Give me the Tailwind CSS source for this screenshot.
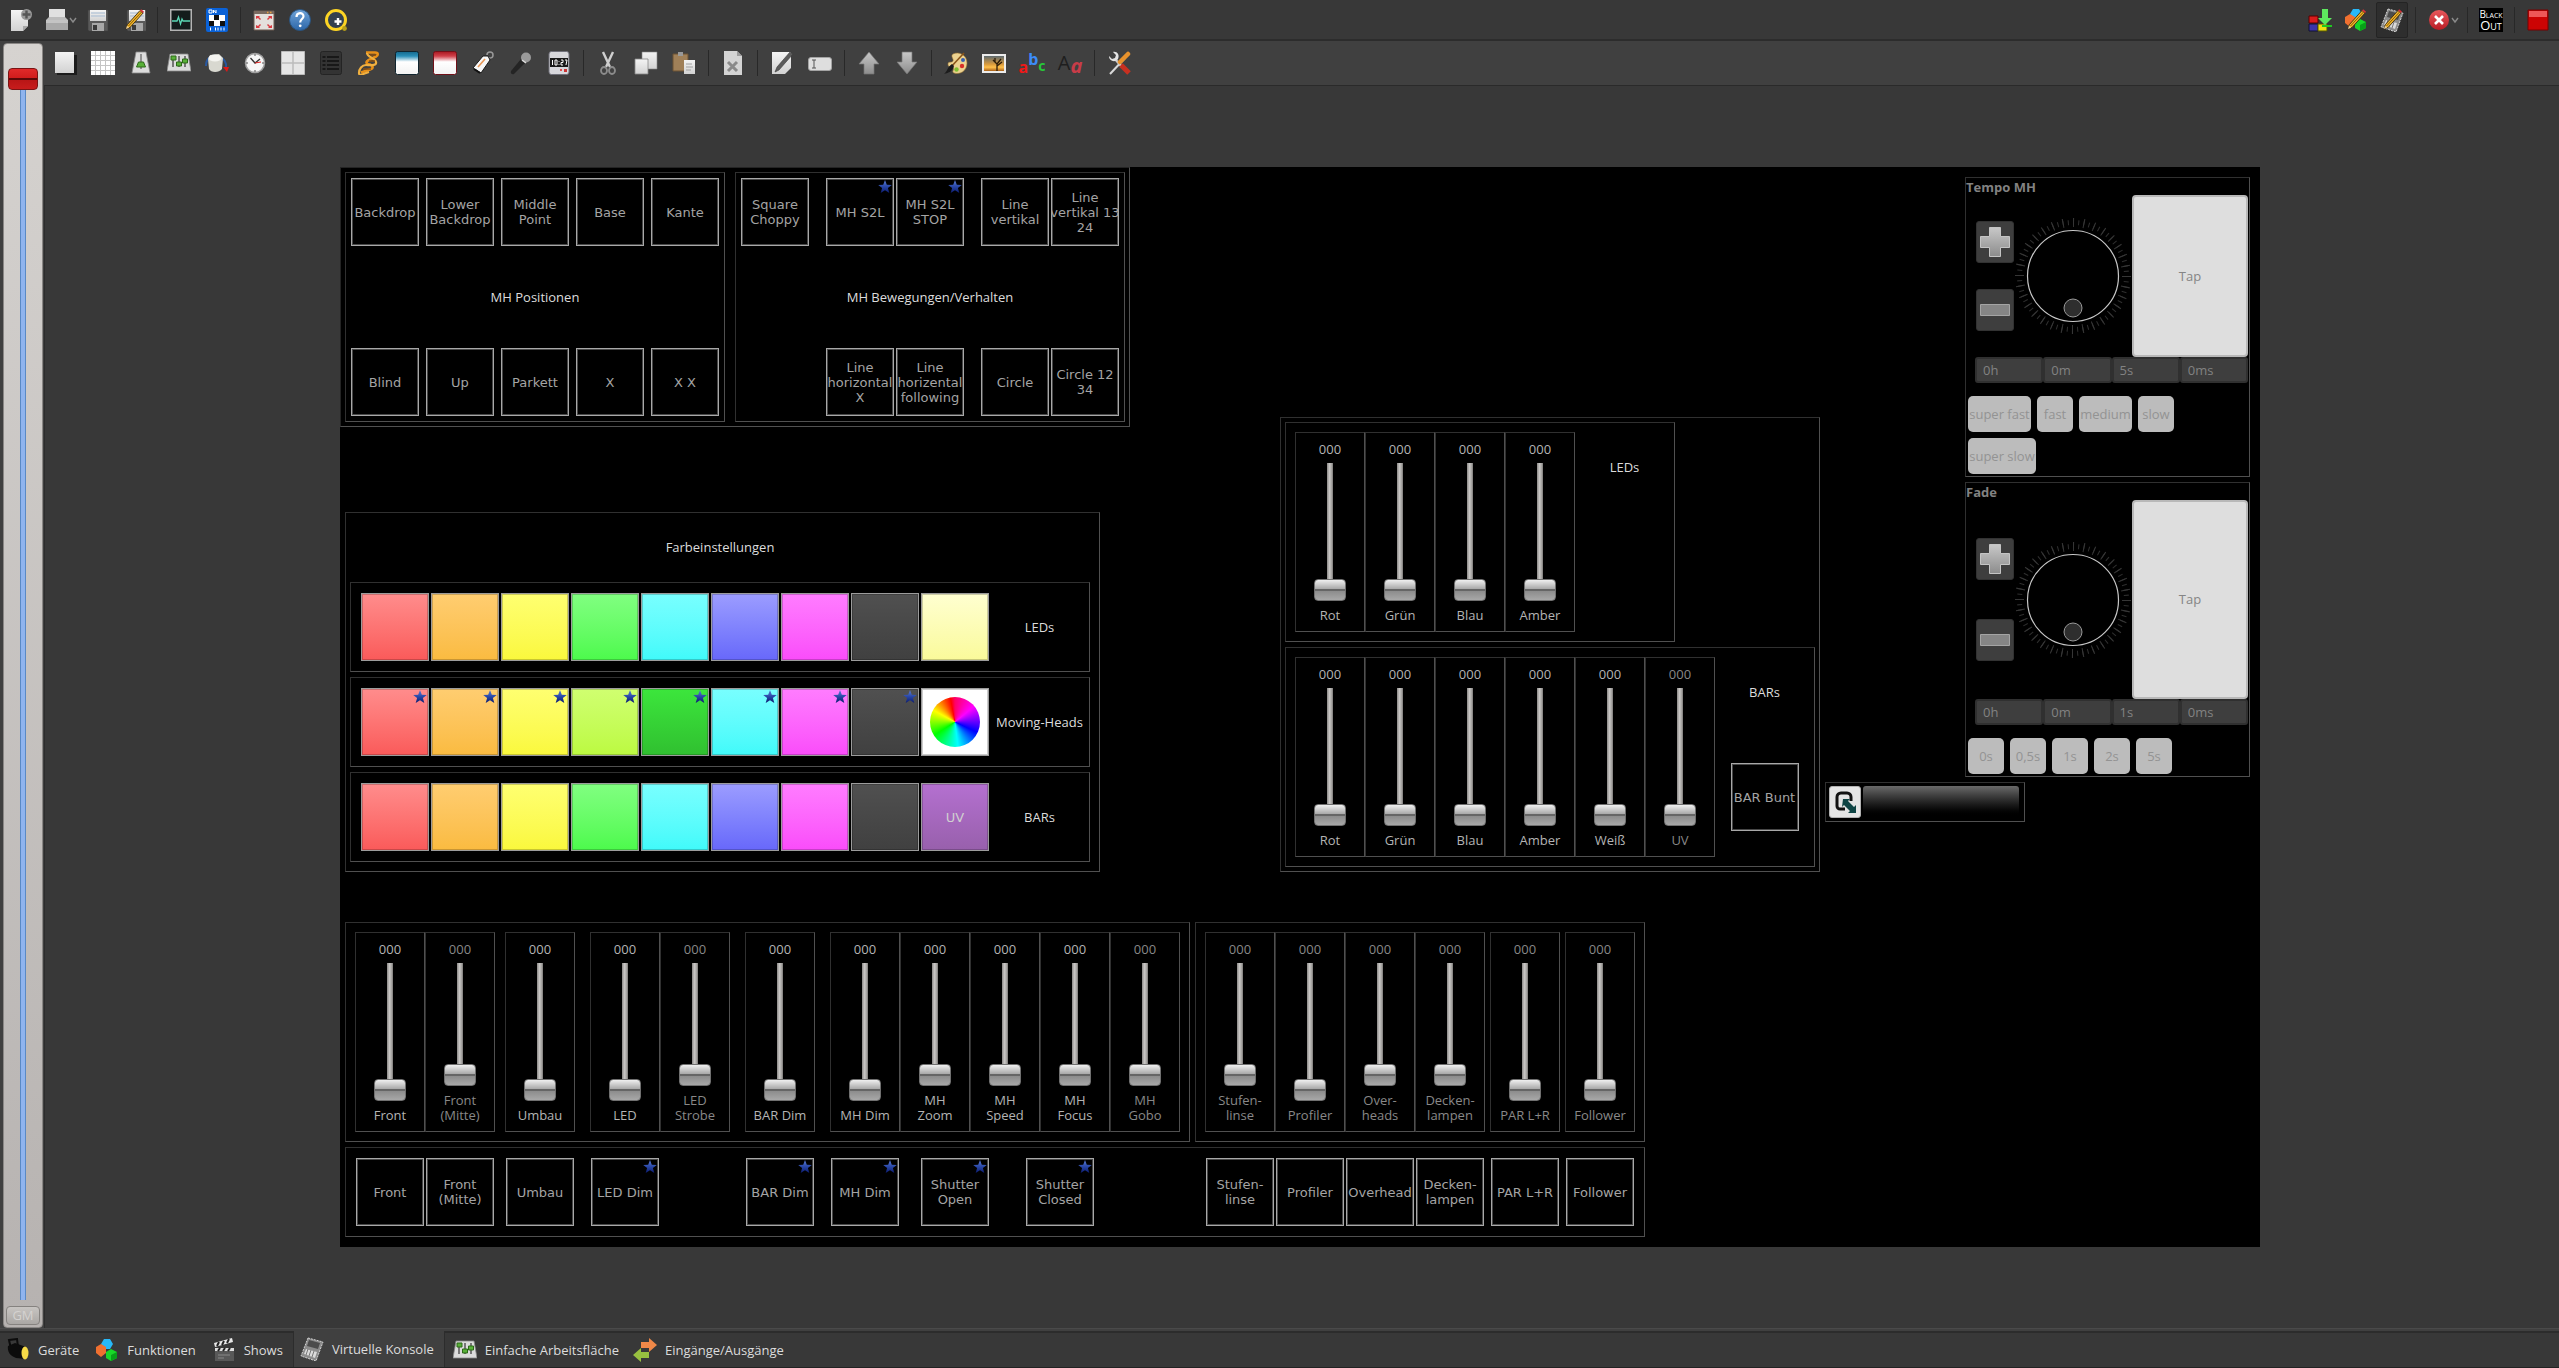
<!DOCTYPE html>
<html lang="de">
<head>
<meta charset="utf-8">
<title>Virtuelle Konsole</title>
<meta name="viewport" content="width=device-width, initial-scale=1">
<script src="https://cdn.jsdelivr.net/npm/@tailwindcss/browser@4"></script>
</head>
<body class="flex h-screen flex-col overflow-hidden bg-[#383838] font-['Open_Sans','Noto_Sans',sans-serif] text-[13px] leading-[15px] text-[#dcdcdc]">

<svg class="absolute size-0" aria-hidden="true">
  <defs>
    <linearGradient id="paper" x1="0" y1="0" x2="0" y2="1"><stop offset="0" stop-color="#f4f4f4"/><stop offset="1" stop-color="#d2d2d2"/></linearGradient>
    <linearGradient id="metal" x1="0" y1="0" x2="0" y2="1"><stop offset="0" stop-color="#c8c8c8"/><stop offset="1" stop-color="#8c8c8c"/></linearGradient>
    <linearGradient id="winBlue" x1="0" y1="0" x2="0" y2="1"><stop offset="0" stop-color="#15688c"/><stop offset=".2" stop-color="#2a8fb8"/><stop offset=".45" stop-color="#fff"/><stop offset="1" stop-color="#f2f2f2"/></linearGradient>
    <linearGradient id="winRed" x1="0" y1="0" x2="0" y2="1"><stop offset="0" stop-color="#a81820"/><stop offset=".2" stop-color="#d0404a"/><stop offset=".45" stop-color="#fff"/><stop offset="1" stop-color="#f2f2f2"/></linearGradient>
    <linearGradient id="starFill" x1="0" y1="0" x2="0" y2="1"><stop offset="0" stop-color="#5c7fd6"/><stop offset=".5" stop-color="#2a48a8"/><stop offset="1" stop-color="#0a1a6e"/></linearGradient>
    <linearGradient id="sunset" x1="0" y1="0" x2="0" y2="1"><stop offset="0" stop-color="#5d6a70"/><stop offset=".55" stop-color="#d99a3c"/><stop offset=".75" stop-color="#ffc04a"/><stop offset="1" stop-color="#a85f18"/></linearGradient>
    <linearGradient id="blueBall" x1="0" y1="0" x2="0" y2="1"><stop offset="0" stop-color="#6fa3d8"/><stop offset="1" stop-color="#2c66a8"/></linearGradient>
    <linearGradient id="redBall" x1="0" y1="0" x2="0" y2="1"><stop offset="0" stop-color="#e8585c"/><stop offset="1" stop-color="#b81c24"/></linearGradient>
    <g id="pencil"><path d="M4 21l1.200-4.200L18 2.500l3 2.600L8 19.500z" fill="#f0b428" stroke="#3a2a10" stroke-width=".9"/><path d="M18 2.500l3 2.600 1-1.400-2.800-2.500z" fill="#d8323a"/><path d="M4 21l1-3.300 2.200 2z" fill="#e8d0a0"/><path d="M6.500 18L19.500 4" stroke="#8a5c08" stroke-width="1"/></g>
    <g id="floppy"><path d="M2 2h20v21H3l-1-1z" fill="#5a5a5a" stroke="#3c3c3c" stroke-width=".6"/><path d="M4 2h16v11H4z" fill="url(#paper)"/><path d="M5 5h14M5 8h14" stroke="#b9c7d8" stroke-width="1.500"/><path d="M6 15h12v8H6z" fill="#a8a8a8"/><path d="M7 17h4v5H7z" fill="#3a3a3a"/></g>

    <symbol id="i-new" viewBox="0 0 24 24"><path d="M2 2h17v16l-5 5H2z" fill="url(#paper)"/><path d="M14 23v-5h5z" fill="#a8a8a8"/><circle cx="17.500" cy="6.500" r="5.500" fill="#9a9a9a"/><path d="M17.500 2.500v8M13.500 6.500h8" stroke="#565656" stroke-width="2.400"/></symbol>
    <symbol id="i-print" viewBox="0 0 24 24"><path d="M4 1h16v11H4z" fill="#e0e0e0"/><path d="M1 12l3-3h16l3 3z" fill="#bcbcbc"/><path d="M1 12h22v10H1z" fill="#a9a9a9"/><path d="M1 12h22v3H1z" fill="#c4c4c4"/></symbol>
    <symbol id="i-chev" viewBox="0 0 8 8"><path d="M1 2l3 4 3-4" fill="none" stroke="#8a8a8a" stroke-width="1.400"/></symbol>
    <symbol id="i-save" viewBox="0 0 24 24"><use href="#floppy"/></symbol>
    <symbol id="i-saveas" viewBox="0 0 24 24"><g transform="translate(3)"><use href="#floppy"/></g><use href="#pencil"/></symbol>
    <symbol id="i-monitor" viewBox="0 0 24 24"><path d="M1 1h22v22H1z" fill="#b4b4b4"/><path d="M2.500 2.500h19v19h-19z" fill="#141c1c"/><path d="M3 13h5l1.500-4 2 7 1.500-5 1 2h7" fill="none" stroke="#5ad6b4" stroke-width="1.300"/></symbol>
    <symbol id="i-dip" viewBox="0 0 24 24"><rect x="1" width="22" height="24" rx="2" fill="#0a62d8"/><path d="M4 2h3v3H4zM8.500 5V2L11 5V2" fill="none" stroke="#fff"/><path d="M4 7h16v11H4z" fill="#fff"/><path d="M4 13h5v5H4zM9 7h5v5H9zM15 13h5v5h-5z" fill="#111"/><path d="M5.500 19.500v3M10.500 19.500v3M13 19.500v3M16 19.500v3M19 19.500v3" stroke="#fff"/></symbol>
    <symbol id="i-full" viewBox="0 0 24 24"><path d="M2 3h20v19H2z" fill="#e4e0dc" stroke="#6a5a50"/><path d="M2 3h20v3H2z" fill="#7a6a60"/><path d="M15 4.500h1.500M18 4.500h1.500" stroke="#e8a040" stroke-width="1.500"/><path d="M4 8h4l-1 1 2 2-1 1-2-2-2 1zM20 8h-4l1 1-2 2 1 1 2-2 2 1zM4 20h4l-1-1 2-2-1-1-2 2-2-1zM20 20h-4l1-1-2-2 1-1 2 2 2-1z" fill="#d83a40"/></symbol>
    <symbol id="i-help" viewBox="0 0 24 24"><circle cx="12" cy="12" r="10.500" fill="url(#blueBall)" stroke="#2a5480"/><path d="M8.500 9c0-5 7-5 7-.8 0 2.800-3.300 3-3.300 6.200" fill="none" stroke="#fff" stroke-width="2.200"/><circle cx="12.200" cy="17.800" r="1.400" fill="#fff"/></symbol>
    <symbol id="i-qlc" viewBox="0 0 24 24"><circle cx="12" cy="12" r="9.500" fill="#32404e" stroke="#fcd424" stroke-width="3"/><path d="M14 10v7M10.500 13.500h7" stroke="#fff" stroke-width="2.400"/><circle cx="20.500" cy="20.500" r="2.400" fill="#b8a018"/></symbol>
    <symbol id="i-download" viewBox="0 0 24 24"><path d="M1 8h9v7H1z" fill="#d81c1c" stroke="#500"/><path d="M1 16h9v7H1z" fill="#3a34a8" stroke="#113"/><path d="M10 16h9v7h-9z" fill="#f0e010" stroke="#550"/><path d="M14 1h6v9h4l-7 7-7-7h4z" fill="#5ee85e"/><path d="M14 18h10" stroke="#20c820" stroke-width="2"/></symbol>
    <g id="cubes"><path d="M9 1l6 0 3 5-3 5H9L6 6z" fill="#28b8f8"/><path d="M1 9l5-3 5 3v6l-5 4-5-4z" fill="#f07030"/><path d="M11 14l5-3 6 3v6l-6 3-5-3z" fill="#18d828"/><path d="M16 17l6-3v6l-6 3z" fill="#08a018"/></g>
    <g id="consoleBody"><path d="M8 1l15 4-7 19L1 19z" fill="#8c8c8c" stroke="#d0d0d0" stroke-dasharray="2 1"/><path d="M9 3l11 3-2 6-11-3z" fill="#4c4c4c"/><path d="M6 12l11 3-2 6-11-4z" fill="#dadada"/><path d="M8 12l-2 6M11 13l-2 6M14 14l-2 6" stroke="#777"/></g>
    <symbol id="i-funcedit" viewBox="0 0 24 24"><use href="#cubes"/><use href="#pencil"/></symbol>
    <symbol id="i-conedit" viewBox="0 0 24 24"><use href="#consoleBody"/><use href="#pencil"/></symbol>
    <symbol id="i-stop" viewBox="0 0 24 24"><circle cx="12" cy="12" r="10" fill="url(#redBall)"/><path d="M8 8l8 8M16 8l-8 8" stroke="#fff" stroke-width="2.600"/></symbol>
    <symbol id="i-red" viewBox="0 0 24 24"><path d="M2 2h20v20H2z" fill="#cc0404" stroke="#700"/><path d="M3 3h18v6H3z" fill="#ee5858"/></symbol>

    <symbol id="i-button" viewBox="0 0 24 24"><path d="M4 4h20v20H4z" fill="#1c1c1c"/><path d="M2 1h19v21H2z" fill="url(#paper)"/></symbol>
    <symbol id="i-grid" viewBox="0 0 24 24"><path d="M0 0h24v24H0z" fill="#fff"/><path d="M4.500 0v24M9.500 0v24M14.500 0v24M19.500 0v24M0 4.500h24M0 9.500h24M0 14.500h24M0 19.500h24" stroke="#c4c4c4"/></symbol>
    <symbol id="i-slider" viewBox="0 0 24 24"><path d="M7 1h10l4 21H3z" fill="#dcdcdc" stroke="#888" stroke-width=".8"/><path d="M12 3v15" stroke="#777" stroke-width="1.500"/><path d="M9.500 11h5l2 5h-9z" fill="#58b038" stroke="#2c6818"/></symbol>
    <symbol id="i-sliders" viewBox="0 0 24 24"><path d="M3 3h18l3 17H0z" fill="#dcdcdc" stroke="#888" stroke-width=".8"/><path d="M6 5v11M12 5v11M18 5v11" stroke="#555" stroke-width="1.500"/><path d="M4 5h5v4H4zM9.500 11h5v4h-5zM15.500 8h5v4h-5z" fill="#58b038" stroke="#2c6818"/></symbol>
    <symbol id="i-knob" viewBox="0 0 24 24"><path d="M1 15C1 7 7 4 11 5M14 6c5 1 8 6 7 11" fill="none" stroke="#2858a0" stroke-width="2"/><path d="M3 8l2-4 9-1 4 4-1 11c-3 4-11 4-13 0z" fill="#d8d8d0"/><ellipse cx="10" cy="7" rx="6.500" ry="3.500" fill="#f4f4f0"/><path d="M18 16l6 0-2 5z" fill="#e01818"/></symbol>
    <symbol id="i-clock" viewBox="0 0 24 24"><circle cx="12" cy="12" r="9.500" fill="#f6f6f6" stroke="#a0a0a0" stroke-width="1.500"/><path d="M12 3v2M12 19v2M3 12h2M19 12h2" stroke="#555"/><path d="M7.500 7l4.500 5 5-4" fill="none" stroke="#333" stroke-width="1.300"/><path d="M12 12l6-1" stroke="#d22"/></symbol>
    <symbol id="i-frame" viewBox="0 0 24 24"><path d="M.5.5h23v23H.5z" fill="#e6e6e6" stroke="#bbb"/><path d="M12 1v22M1 12h22" stroke="#bcbcbc" stroke-width="1.500"/></symbol>
    <symbol id="i-list" viewBox="0 0 24 24"><rect x="1.500" y=".5" width="21" height="23" rx="2" fill="#333" stroke="#242424"/><path d="M3.500 6h3M3.500 10h3M3.500 14h3M3.500 18h3M8 6h12M8 10h12M8 14h12M8 18h12" stroke="#181818" stroke-width="2"/></symbol>
    <symbol id="i-dna" viewBox="0 0 24 24"><path d="M9 1.500h9c4 0 3 3 1 4l-8 4c-3 2-1 4 2 4 3 1 4 4 0 5l-9 3" fill="none" stroke="#e89018" stroke-width="2.600"/><path d="M10 2c0 4 8 5 9 9s-6 3-10 3-7 4-7 8 6 0 10-1" fill="none" stroke="#f0b040" stroke-width="2.200"/><path d="M13 4h6M12 10h6M6 18h8" stroke="#8a5010" stroke-width="1.500"/></symbol>
    <symbol id="i-winblue" viewBox="0 0 24 24"><rect x="0.500" y=".5" width="23" height="23" rx="2" fill="url(#winBlue)" stroke="#10242e"/></symbol>
    <symbol id="i-winred" viewBox="0 0 24 24"><rect x="0.500" y=".5" width="23" height="23" rx="2" fill="url(#winRed)" stroke="#701018"/></symbol>
    <symbol id="i-label" viewBox="0 0 24 24"><path d="M16 4c0-4 6-4 6 0s-4 3-5 2" fill="none" stroke="#999" stroke-width="1.500"/><path d="M2 17L12 5l5 0 2 4-9 13z" fill="#f8f8f8" stroke="#1a1a1a"/><path d="M7 16l7-8" stroke="#e89858" stroke-width="1.600"/><path d="M3 18l6 4" stroke="#111" stroke-width="2"/></symbol>
    <symbol id="i-mic" viewBox="0 0 24 24"><path d="M12 8l4 4L5 23c-2 1-4-1-3-3z" fill="#242424"/><circle cx="17" cy="6.500" r="5" fill="#9a9a9a"/><path d="M13 9l4 3" stroke="#ddd" stroke-width="1.500"/></symbol>
    <symbol id="i-digi" viewBox="0 0 24 24"><rect x="2" y=".5" width="20" height="23" rx="2.500" fill="#d8d8dc" stroke="#70707a"/><path d="M3 7h18v9H3z" fill="#1a1a1a"/><path d="M5.500 9v5M8 9h2v5H8zM12 10v.8M12 13v.8M14 9h2v2.500h-2V14h2M18 9h2l-1 5" fill="none" stroke="#fff"/><circle cx="14" cy="19" r="1" fill="#d22"/><path d="M17 18h3v3h-3z" fill="#c33"/></symbol>
    <symbol id="i-cut" viewBox="0 0 24 24"><path d="M7 1l7 15M17 1L10 16" stroke="#cfcfcf" stroke-width="2.400"/><ellipse cx="8" cy="19.500" rx="3" ry="3.500" fill="none" stroke="#8c8c8c" stroke-width="1.800"/><ellipse cx="16" cy="19.500" rx="3" ry="3.500" fill="none" stroke="#8c8c8c" stroke-width="1.800"/></symbol>
    <symbol id="i-copy" viewBox="0 0 24 24"><path d="M8 1h15v17H8z" fill="url(#paper)" stroke="#888" stroke-width=".6"/><path d="M1 8h13v15H1z" fill="url(#paper)" stroke="#888" stroke-width=".8"/></symbol>
    <symbol id="i-paste" viewBox="0 0 24 24"><path d="M1 3h15v17H1z" fill="#a08058" stroke="#6c5232"/><path d="M6 1h5v4H6z" fill="#999"/><path d="M12 9h11v14H12z" fill="url(#paper)"/><path d="M14 13h6M14 16h7M14 19h5" stroke="#a0a0a0"/></symbol>
    <symbol id="i-delete" viewBox="0 0 24 24"><path d="M3 0h13l5 5v19H3z" fill="#d4d4d4"/><path d="M16 0v5h5z" fill="#9c9c9c"/><path d="M7 11l9 9M16 11l-9 9" stroke="#8a8a8a" stroke-width="3"/></symbol>
    <symbol id="i-edit" viewBox="0 0 24 24"><path d="M2 1h19v16l-6 6H2z" fill="url(#paper)"/><path d="M5 21l2-5L20 1l3 2L9 19z" fill="#5c5c5c" stroke="#3a3a3a" stroke-width=".6"/></symbol>
    <symbol id="i-rename" viewBox="0 0 24 24"><rect x=".5" y="6.500" width="23" height="13" rx="2.500" fill="#dedede" stroke="#a4a4a4"/><path d="M4 9h4M6 9v8M4 17h4" stroke="#555"/></symbol>
    <symbol id="i-up" viewBox="0 0 24 24"><path d="M12 1l10 12h-5v10H7V13H2z" fill="url(#metal)" stroke="#777" stroke-width=".7"/></symbol>
    <symbol id="i-down" viewBox="0 0 24 24"><path d="M12 23l10-12h-5V1H7v10H2z" fill="url(#metal)" stroke="#777" stroke-width=".7"/></symbol>
    <symbol id="i-palette" viewBox="0 0 24 24"><path d="M9 3C15 0 23 4 23 12s-7 12-13 10c-3-1 1-4-1-6-2-1-5 1-5-3 0-3 4-1 5-3s-3-5 0-7z" fill="#ecd290" stroke="#9a7430" stroke-width=".6"/><circle cx="19" cy="9" r="2" fill="#3860b0"/><circle cx="18" cy="15" r="2.200" fill="#d83028"/><circle cx="12.500" cy="18.500" r="2.200" fill="#80c030"/><path d="M20 2L6 17" stroke="#8a5418" stroke-width="1.600"/><path d="M8 13l2 2c-2 6-6 7-10 8 4-3 3-7 8-10z" fill="#1c1c1c"/></symbol>
    <symbol id="i-picture" viewBox="0 0 24 24"><path d="M0 3h24v19H0z" fill="#ececec"/><path d="M2 5h20v15H2z" fill="url(#sunset)"/><path d="M15 20v-7l-4-4M15 13l4-5M15 15l5-4M13 11V7" fill="none" stroke="#2c1c08" stroke-width="1.300"/></symbol>
    <symbol id="i-tools" viewBox="0 0 24 24"><path d="M3 23L18 7" stroke="#d8d8d8" stroke-width="2"/><path d="M8 8l7 8" stroke="#ccc" stroke-width="2.600"/><path d="M2 5l3 3 3-1 1-3-3-3c4-1 7 3 5 7-3 4-9 2-9-3z" fill="#e4e4e4"/><path d="M14 14l8 8" stroke="#c83020" stroke-width="5"/><path d="M13 11L21 3" stroke="#e8922c" stroke-width="4.500" stroke-linecap="round"/></symbol>

    <symbol id="i-lamp" viewBox="0 0 24 24"><path d="M3 2l8-1 1 8-7 2z" fill="none" stroke="#0c0c0c" stroke-width="2"/><path d="M2 8l7-3 11 4v12l-10-1C4 18 1 13 2 8z" fill="#0c0c0c"/><ellipse cx="19" cy="15" rx="3.500" ry="6.500" fill="#f8dc48"/></symbol>
    <symbol id="i-cubes" viewBox="0 0 24 24"><use href="#cubes"/></symbol>
    <symbol id="i-clap" viewBox="0 0 24 24"><path d="M3 10h19v13H3z" fill="#585858"/><path d="M2 5l18-5 1 4L3 9z" fill="#e8e8e8"/><path d="M5 8l2-4M10 7l2-4M15 5l2-4" stroke="#222" stroke-width="2"/><path d="M3 10h19v3H3z" fill="#ddd"/><path d="M6 13l2-3M11 13l2-3M16 13l2-3" stroke="#222" stroke-width="2"/><path d="M6 17h12M6 20h6" stroke="#888"/></symbol>
    <symbol id="i-console" viewBox="0 0 24 24"><use href="#consoleBody"/></symbol>
    <symbol id="i-io" viewBox="0 0 24 24"><path d="M8 4h8V0l8 7-8 7v-4H8z" fill="#f08848"/><path d="M16 14H8v-4l-8 7 8 7v-4h8z" fill="#98c040"/></symbol>
    <symbol id="i-star" viewBox="0 0 14 14"><path d="M7 0l1.800 4.700 5 .2L9.900 8l1.400 5L7 10.300 2.700 13l1.400-5L.2 4.900l5-.2z" fill="url(#starFill)"/></symbol>
    <symbol id="i-plus" viewBox="0 0 30 30"><path d="M9.500.5h11v9h9v11h-9v9h-11v-9h-9v-11h9z" fill="url(#metal)" stroke="#c4c4c4"/></symbol>
    <symbol id="i-minus" viewBox="0 0 30 30"><path d="M.5 9.500h29v11H.5z" fill="#858585" stroke="#a4a4a4"/></symbol>
    <symbol id="i-mark" viewBox="0 0 24 24"><path d="M12 19H7a3 3 0 01-3-3V7a4 4 0 014-4h6a4 4 0 014 4v4" fill="none" stroke="#111" stroke-width="3"/><path d="M10 9h7l-2 2 6 6 2-2v8h-8l2-2-6-6-2 2z" fill="#0e4444"/></symbol>
    <symbol id="i-dial" viewBox="0 0 118 118">
      <g fill="none" transform="rotate(90 59 59)"><circle cx="59" cy="59" r="53.500" pathLength="64" stroke="#2e2e2e" stroke-width="5" stroke-dasharray=".2 .8"/><circle cx="59" cy="59" r="53.500" pathLength="32" stroke="#363636" stroke-width="9" stroke-dasharray=".1 .9"/></g>
      <circle cx="59" cy="59" r="45.500" fill="#000" stroke="#c8c8c8" stroke-width="1.200"/><circle cx="59" cy="91" r="9" fill="#2e2e2e" stroke="#9a9a9a"/>
    </symbol>
  </defs>
</svg>

<header class="flex h-[41px] shrink-0 items-center justify-between border-b-2 border-[#2c2c2c] px-[5px]">
  <div class="flex items-center gap-1" data-tools="new print> save saveas | monitor dip | full help qlc"></div>
  <div class="flex items-center gap-1" data-tools="download funcedit conedit! | stop> | blackout | red"></div>
</header>

<div class="flex min-h-0 flex-1">
  <aside class="flex w-11 shrink-0 flex-col bg-[#404040] pt-0.5 pl-[3px] pr-px">
    <div class="flex min-h-0 flex-1 flex-col items-center rounded-sm border border-[#8a8785] bg-linear-to-b from-[#d6d3d0] to-[#b6b2b0] pt-6 pb-0.5">
      <input type="range" min="0" max="255" value="255" aria-label="Grand Master" class="m-0 mb-1.5 min-h-0 w-[30px] flex-1 appearance-none bg-[linear-gradient(to_right,#3f74b0,#8fb4ee_25%,#8fb4ee_75%,#3f74b0)] bg-[length:6px_100%] bg-center bg-no-repeat [direction:rtl] [writing-mode:vertical-lr] [&::-webkit-slider-thumb]:h-[22px] [&::-webkit-slider-thumb]:w-[30px] [&::-webkit-slider-thumb]:appearance-none [&::-webkit-slider-thumb]:rounded-[4px] [&::-webkit-slider-thumb]:border [&::-webkit-slider-thumb]:border-[#7a1414] [&::-webkit-slider-thumb]:bg-[linear-gradient(#e02a2a,#d01c1c_45%,#5a0808_46%,#5a0808_54%,#b81616_55%,#c81c1c)]">
      <button class="h-[19px] w-[34px] rounded-[4px] border border-[#85827f] bg-linear-to-b from-[#c8c5c2] to-[#aaa7a4] text-[#d4d2d0]">GM</button>
    </div>
  </aside>

  <div class="flex min-w-0 flex-1 flex-col">
    <div class="flex h-[45px] shrink-0 items-center gap-1 border-b border-[#2a2a2a] bg-[#404040] pl-1" data-tools="wide button grid slider sliders knob clock frame list dna winblue winred label mic digi | cut copy paste | delete | edit rename | up down | palette picture abc font | tools"></div>

    <main class="flex min-h-0 flex-1 items-center justify-center overflow-hidden border-l border-[#2c2c2c] pr-1">
      <!-- free canvas: frames sit where the operator dropped them -->
      <div class="relative h-[1080px] w-[1920px] shrink-0 bg-black">

        <section class="absolute top-0 left-0 flex h-[260px] w-[790px] gap-2.5 border border-t-[#242424] border-r-[#505050] border-b-[#505050] border-l-[#242424] p-1">
          <div class="flex w-[380px] flex-col justify-between border border-t-[#303030] border-r-[#505050] border-b-[#505050] border-l-[#303030] px-1 py-1">
            <div class="flex gap-[5px]" data-buttons="Backdrop;Lower/Backdrop;Middle/Point;Base;Kante"></div>
            <h2 class="text-center">MH Positionen</h2>
            <div class="flex gap-[5px]" data-buttons="Blind;Up;Parkett;X;X X"></div>
          </div>
          <div class="flex w-[390px] flex-col justify-between border border-t-[#303030] border-r-[#505050] border-b-[#505050] border-l-[#303030] px-1 py-1">
            <div class="flex gap-[15px]">
              <div class="flex" data-buttons="Square/Choppy"></div>
              <div class="flex" data-buttons="MH S2L*;MH S2L/STOP*"></div>
              <div class="flex" data-buttons="Line/vertikal;Line/vertikal 13/24"></div>
            </div>
            <h2 class="text-center">MH Bewegungen/Verhalten</h2>
            <div class="flex gap-[15px] pl-[85px]">
              <div class="flex" data-buttons="Line/horizontal/X;Line/horizental/following"></div>
              <div class="flex" data-buttons="Circle;Circle 12/34"></div>
            </div>
          </div>
        </section>

        <section class="absolute top-[345px] left-[5px] flex h-[360px] w-[755px] flex-col gap-[5px] border border-t-[#303030] border-r-[#505050] border-b-[#505050] border-l-[#303030] pr-[9px] pl-1">
          <h2 class="pt-[27px] pb-[22px] text-center">Farbeinstellungen</h2>
          <div class="flex h-[90px] items-center border border-t-[#303030] border-r-[#505050] border-b-[#505050] border-l-[#303030] pl-[9px]"><div class="flex" data-swatches="red orange yellow green cyan blue magenta dark cream"></div><h3 class="flex-1 text-center">LEDs</h3></div>
          <div class="flex h-[90px] items-center border border-t-[#303030] border-r-[#505050] border-b-[#505050] border-l-[#303030] pl-[9px]"><div class="flex" data-swatches="red* orange* yellow* lime* forest* cyan* magenta* dark* wheel"></div><h3 class="flex-1 text-center">Moving-Heads</h3></div>
          <div class="flex h-[90px] items-center border border-t-[#303030] border-r-[#505050] border-b-[#505050] border-l-[#303030] pl-[9px]"><div class="flex" data-swatches="red orange yellow green cyan blue magenta dark uv"></div><h3 class="flex-1 text-center">BARs</h3></div>
        </section>

        <section class="absolute top-[250px] left-[940px] flex h-[455px] w-[540px] flex-col gap-[5px] border border-t-[#303030] border-r-[#505050] border-b-[#505050] border-l-[#303030] p-1">
          <div class="flex h-[220px] w-[390px] border border-t-[#303030] border-r-[#505050] border-b-[#505050] border-l-[#303030] py-[9px] pl-[9px]">
            <div class="flex" data-sliders="Rot;Grün;Blau;Amber"></div>
            <h3 class="flex-1 pt-7 text-center">LEDs</h3>
          </div>
          <div class="flex h-[220px] border border-t-[#303030] border-r-[#505050] border-b-[#505050] border-l-[#303030] py-[9px] pl-[9px]">
            <div class="flex" data-sliders="Rot;Grün;Blau;Amber;Weiß;UV~"></div>
            <div class="flex flex-1 flex-col items-center justify-between pt-7 pb-[25px]"><h3>BARs</h3><div data-buttons="BAR Bunt"></div></div>
          </div>
        </section>

        <section class="absolute top-[755px] left-[5px] flex h-[220px] w-[845px] gap-[15px] border border-t-[#303030] border-r-[#505050] border-b-[#505050] border-l-[#303030] p-[9px]">
          <div class="flex gap-2.5"><div class="flex" data-sliders="Front;Front/(Mitte)~"></div><div class="flex" data-sliders="Umbau"></div></div>
          <div class="flex" data-sliders="LED;LED/Strobe~"></div>
          <div class="flex" data-sliders="BAR Dim"></div>
          <div class="flex" data-sliders="MH Dim;MH/Zoom;MH/Speed;MH/Focus;MH/Gobo~"></div>
        </section>

        <section class="absolute top-[755px] left-[855px] flex h-[220px] w-[450px] gap-[5px] border border-t-[#303030] border-r-[#505050] border-b-[#505050] border-l-[#303030] p-[9px]">
          <div class="flex" data-sliders="Stufen-/linse~;Profiler~;Over-/heads~;Decken-/lampen~"></div>
          <div class="flex" data-sliders="PAR L+R~"></div>
          <div class="flex" data-sliders="Follower~"></div>
        </section>

        <section class="absolute top-[980px] left-[5px] flex h-[90px] w-[1300px] justify-between border border-t-[#303030] border-r-[#505050] border-b-[#505050] border-l-[#303030] p-[9px]">
          <div class="flex">
            <div class="flex" data-buttons="Front;Front/(Mitte)"></div>
            <div class="ml-2.5" data-buttons="Umbau"></div>
            <div class="ml-[15px]" data-buttons="LED Dim*"></div>
            <div class="ml-[85px]" data-buttons="BAR Dim*"></div>
            <div class="ml-[15px]" data-buttons="MH Dim*"></div>
            <div class="ml-5" data-buttons="Shutter/Open*"></div>
            <div class="ml-[35px]" data-buttons="Shutter/Closed*"></div>
          </div>
          <div class="flex gap-[5px]">
            <div class="flex" data-buttons="Stufen-/linse;Profiler;Overhead;Decken-/lampen"></div>
            <div data-buttons="PAR L+R"></div>
            <div data-buttons="Follower"></div>
          </div>
        </section>

        <section class="absolute top-2.5 left-[1625px] flex h-[300px] w-[285px] flex-col border border-t-[#303030] border-r-[#505050] border-b-[#505050] border-l-[#303030] text-[#828282]" data-speed="Tempo MH;0h 0m 5s 0ms;super fast/fast/medium/slow/super slow"></section>
        <section class="absolute top-[315px] left-[1625px] flex h-[295px] w-[285px] flex-col border border-t-[#303030] border-r-[#505050] border-b-[#505050] border-l-[#303030] text-[#828282]" data-speed="Fade;0h 0m 1s 0ms;0s/0,5s/1s/2s/5s"></section>

        <section class="absolute top-[615px] left-[1485px] flex h-10 w-[200px] gap-0.5 border border-t-[#303030] border-r-[#505050] border-b-[#505050] border-l-[#303030] p-[3px] pr-[5px]">
          <button aria-label="Animation" class="flex w-8 items-center justify-center rounded-[3px] border border-[#b0b0b0] bg-[#e4e4e4]"><svg class="size-6"><use href="#i-mark"/></svg></button>
          <div class="flex-1 rounded-[3px] bg-linear-to-b from-[#6a6a6a] to-black"></div>
        </section>
      </div>
    </main>
  </div>
</div>

<nav class="flex h-10 shrink-0 items-stretch border-t border-b border-t-[#4a4a4a] border-b-[#222] bg-[#404040]">
  <div class="mt-0.5 flex items-center gap-4 border-t-2 border-r border-[#2c2c2c] bg-[#383838] pr-2.5 pl-1.5">
    <a href="#geraete" class="flex items-center gap-2"><svg class="size-6"><use href="#i-lamp"/></svg>Geräte</a>
    <a href="#funktionen" class="flex items-center gap-2"><svg class="size-6"><use href="#i-cubes"/></svg>Funktionen</a>
    <a href="#shows" class="flex items-center gap-2"><svg class="size-6"><use href="#i-clap"/></svg>Shows</a>
  </div>
  <a href="#konsole" aria-current="page" class="flex items-center gap-2 pt-0.5 pr-2.5 pl-1.5"><svg class="size-6"><use href="#i-console"/></svg>Virtuelle Konsole</a>
  <div class="mt-0.5 flex flex-1 items-center gap-3.5 border-t-2 border-l border-[#2c2c2c] bg-[#383838] pl-2">
    <a href="#arbeitsflaeche" class="flex items-center gap-2"><svg class="size-6"><use href="#i-sliders"/></svg>Einfache Arbeitsfläche</a>
    <a href="#ein-aus" class="flex items-center gap-2"><svg class="size-6"><use href="#i-io"/></svg>Eingänge/Ausgänge</a>
  </div>
</nav>

<script>
const fill = (key, render) => document.querySelectorAll(`[data-${key}]`).forEach(el => { el.innerHTML = render(el.dataset[key]); });
const star = '<svg class="absolute top-px right-px size-3.5"><use href="#i-star"/></svg>';

// toolbars: "|" separator, ">" drop-down arrow, "!" pressed
const special = {
  blackout: '<span class="flex h-6 w-6 flex-col items-center justify-center bg-black font-[\'Roboto\',sans-serif] leading-[11px] text-white [font-variant:small-caps]"><span class="text-[10px]">Black</span><span class="text-[13px]">Out</span></span>',
  abc: '<span class="flex h-6 items-center font-[\'Liberation_Serif\',serif] text-base leading-6 font-bold"><span class="pt-2 text-[#f01818]">a</span><span class="pb-2 text-[#3c8cf8]">b</span><span class="pt-1.5 text-sm text-[#28c838]">c</span></span>',
  font: '<span class="flex h-6 items-center font-[\'Liberation_Serif\',serif] text-xl leading-6"><span class="text-[#1e1e1e]">A</span><span class="pt-1.5 font-bold text-[#c83c48] italic">a</span></span>'
};
fill('tools', spec => {
  const wide = spec.startsWith('wide ');
  return spec.replace('wide ', '').split(' ').map(t => {
    if (t === '|') return '<span class="flex h-[26px] w-[7px] justify-center"><span class="w-px bg-[#282828]"></span></span>';
    const name = t.replace(/[>!]/, '');
    const icon = special[name] || `<svg class="size-6 shrink-0"><use href="#i-${name}"/></svg>`;
    const box = t.endsWith('>') ? 'flex h-9 w-[37px] items-center pl-1'
      : t.endsWith('!') ? 'flex h-9 w-8 items-center justify-center rounded-xs border border-[#242424] bg-[#2e2e2e]'
      : wide ? 'flex h-9 w-[34px] items-center justify-center' : 'flex h-9 w-8 items-center justify-center';
    return `<button aria-label="${name}" class="${box}">${icon}${t.endsWith('>') ? '<svg class="size-2 shrink-0"><use href="#i-chev"/></svg>' : ''}</button>`;
  }).join('');
});

// captions: "/" breaks the line, "*" marks an input binding
fill('buttons', spec => spec.split(';').map(t =>
  `<button class="relative m-px flex size-[68px] shrink-0 items-center justify-center overflow-hidden border border-[#a8a8a8] font-['DejaVu_Sans',sans-serif] text-[#a4a4a4] inset-ring inset-ring-[#484848]"><span class="-mx-2 text-center whitespace-nowrap">${t.replace('*', '').replace(/\//g, '<br>')}</span>${t.endsWith('*') ? star : ''}</button>`).join(''));

const swatch = {
  red: 'bg-linear-to-b from-[#ff8c8c] to-[#fa5a5a]', orange: 'bg-linear-to-b from-[#ffcd70] to-[#fabb40]',
  yellow: 'bg-linear-to-b from-[#ffff70] to-[#faf83c]', green: 'bg-linear-to-b from-[#80ff80] to-[#4cfa4c]',
  cyan: 'bg-linear-to-b from-[#78ffff] to-[#40fafa]', blue: 'bg-linear-to-b from-[#9c9cff] to-[#6868fa]',
  magenta: 'bg-linear-to-b from-[#ff7cff] to-[#fa4cfa]', dark: 'bg-linear-to-b from-[#505050] to-[#404040]',
  cream: 'bg-linear-to-b from-[#ffffd0] to-[#fafa9a]', lime: 'bg-linear-to-b from-[#d0ff70] to-[#bcfa40]',
  forest: 'bg-linear-to-b from-[#3ce63c] to-[#30c030]', uv: 'bg-linear-to-b from-[#b470d0] to-[#9860ac]', wheel: 'bg-white'
};
fill('swatches', spec => spec.split(' ').map(t => {
  const name = t.replace('*', '');
  const inner = name === 'uv' ? 'UV' : name === 'wheel' ? '<span class="size-[50px] rounded-full bg-[conic-gradient(#f06,#f0f_14%,#00f_32%,#0ff_48%,#0f0_66%,#ff0_83%,#f00_97%,#f06)]"></span>' : '';
  return `<button aria-label="${name}" class="relative m-px flex size-[68px] shrink-0 items-center justify-center border border-[#9c9c9c] font-['DejaVu_Sans',sans-serif] text-[#d0d0d0] inset-ring inset-ring-black/20 ${swatch[name]}">${inner}${t.endsWith('*') ? star : ''}</button>`;
}).join(''));

// "~" marks a slider without input
fill('sliders', spec => spec.split(';').map(t => {
  const label = t.replace('~', '');
  return `<label class="flex h-[200px] w-[70px] shrink-0 flex-col items-center border border-t-[#303030] border-r-[#505050] border-b-[#505050] border-l-[#303030] pt-[9px] pb-2 text-center ${t.endsWith('~') ? 'text-[#888]' : 'text-[#b4b4b4]'}"><output>000</output><input type="range" min="0" max="255" value="0" class="m-0 mt-1.5 mb-[7px] min-h-0 w-8 flex-1 appearance-none bg-[linear-gradient(to_right,#8a8886,#c8c6c4_40%,#b0aeac_70%,#7a7876)] bg-[length:6px_100%] bg-center bg-no-repeat [direction:rtl] [writing-mode:vertical-lr] [&::-webkit-slider-thumb]:h-[22px] [&::-webkit-slider-thumb]:w-8 [&::-webkit-slider-thumb]:appearance-none [&::-webkit-slider-thumb]:rounded-[4px] [&::-webkit-slider-thumb]:border [&::-webkit-slider-thumb]:border-[#707070] [&::-webkit-slider-thumb]:bg-[linear-gradient(#f0f0f0,#a8a8a8_45%,#666_46%,#666_54%,#8c8c8c_55%,#a8a8a8)]"><span>${label.replace(/\//g, '<br>')}</span></label>`;
}).join(''));

const presetWidth = { 'super fast': 'w-[63px]', 'medium': 'w-[53px]', 'super slow': 'w-[68px]' };
fill('speed', spec => {
  const [title, times, presets] = spec.split(';');
  return `<h3 class="h-[17px] pt-0.5 font-bold">${title}</h3>
  <div class="flex min-h-0 flex-1 pr-px pl-2.5">
    <div class="flex w-[38px] flex-col justify-evenly">
      <button aria-label="Mehr" class="flex h-[42px] items-center justify-center rounded-[3px] border border-[#323232] bg-[#3e3e3e]"><svg class="size-[30px]"><use href="#i-plus"/></svg></button>
      <button aria-label="Weniger" class="flex h-[42px] items-center justify-center rounded-[3px] border border-[#323232] bg-[#3e3e3e]"><svg class="size-[30px]"><use href="#i-minus"/></svg></button>
    </div>
    <div class="flex flex-1 items-center justify-center"><svg class="size-[118px]"><use href="#i-dial"/></svg></div>
    <button class="w-[116px] rounded-[4px] border-2 border-[#b8b8b8] bg-[#dedede] text-[#858585]">Tap</button>
  </div>
  <div class="ml-[9px] mr-px flex h-[26px]">${times.split(' ').map(v => `<input aria-label="${title} ${v}" value="${v}" class="w-0 flex-1 rounded-[3px] border-2 border-[#303030] bg-[#3e3e3e] pl-1.5">`).join('')}</div>
  <div class="flex flex-wrap gap-1.5 pt-[13px] pr-4 pb-0.5 pl-0.5">${presets.split('/').map(p => `<button class="h-9 rounded-[5px] bg-[#bcbcbc] whitespace-nowrap text-[#939393] ${presetWidth[p] || 'w-9'}">${p}</button>`).join('')}</div>`;
});
</script>
</body>
</html>
